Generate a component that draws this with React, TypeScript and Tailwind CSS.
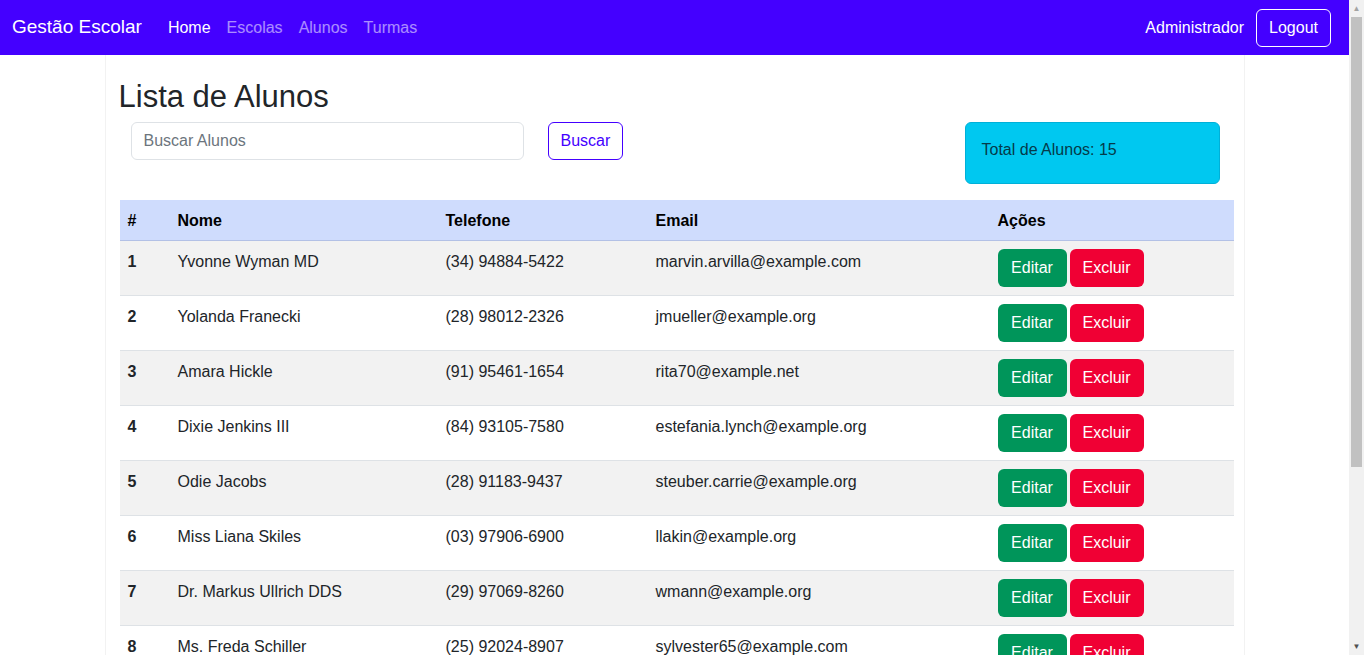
import React from "react";

const alunos = [
  { id: 1, nome: "Yvonne Wyman MD", tel: "(34) 94884-5422", email: "marvin.arvilla@example.com" },
  { id: 2, nome: "Yolanda Franecki", tel: "(28) 98012-2326", email: "jmueller@example.org" },
  { id: 3, nome: "Amara Hickle", tel: "(91) 95461-1654", email: "rita70@example.net" },
  { id: 4, nome: "Dixie Jenkins III", tel: "(84) 93105-7580", email: "estefania.lynch@example.org" },
  { id: 5, nome: "Odie Jacobs", tel: "(28) 91183-9437", email: "steuber.carrie@example.org" },
  { id: 6, nome: "Miss Liana Skiles", tel: "(03) 97906-6900", email: "llakin@example.org" },
  { id: 7, nome: "Dr. Markus Ullrich DDS", tel: "(29) 97069-8260", email: "wmann@example.org" },
  { id: 8, nome: "Ms. Freda Schiller", tel: "(25) 92024-8907", email: "sylvester65@example.com" },
  { id: 9, nome: "Prof. Ken Bauch", tel: "(41) 93310-1182", email: "kbauch@example.net" },
];

export default function App() {
  return (
    <div className="h-[655px] overflow-hidden flex bg-white text-[#212529] font-['Liberation_Sans',Arial,sans-serif] text-[16px]">
      <div className="w-[1349px] h-full overflow-hidden shrink-0">
        {/* navbar */}
        <nav className="h-[55px] bg-[#4400ff] flex items-center justify-between pl-3 pr-[18px]">
          <div className="flex items-center">
            <span className="text-white text-[19px] mr-[26px]">Gestão Escolar</span>
            <div className="flex items-center gap-4 text-[16px]">
              <a className="text-white">Home</a>
              <a className="text-white/55">Escolas</a>
              <a className="text-white/55">Alunos</a>
              <a className="text-white/55">Turmas</a>
            </div>
          </div>
          <div className="flex items-center gap-3">
            <span className="text-white">Administrador</span>
            <button className="h-[38px] px-3 rounded-md border border-white text-white">Logout</button>
          </div>
        </nav>

        {/* container */}
        <div className="w-[1140px] mx-auto border-x border-[#f2f2f2] px-3 pb-8">
          <h1 className="text-[31px] leading-[38px] pt-[23px] mb-[6px] pl-[1px]">Lista de Alunos</h1>

          <div className="flex items-start mb-4">
            <div className="pl-[13px]">
              <input
                className="w-[393px] h-[38px] border border-[#dee2e6] rounded-md px-3 placeholder:text-[#6c757d] outline-none"
                placeholder="Buscar Alunos"
              />
            </div>
            <button className="ml-[24px] h-[38px] px-3 rounded-md border border-[#4400ff] text-[#4400ff]">Buscar</button>
            <div className="ml-auto mr-3 w-[255px] h-[62px] rounded-md bg-[#00c8f0] border border-[#00b0d8] px-4 pt-[15px] text-[#053b4a]">
              Total de Alunos: 15
            </div>
          </div>

          <table className="w-[1114px] ml-[2px] border-collapse table-fixed">
            <colgroup>
              <col className="w-[50px]" />
              <col className="w-[268px]" />
              <col className="w-[210px]" />
              <col className="w-[342px]" />
              <col className="w-[244px]" />
            </colgroup>
            <thead>
              <tr className="bg-[#cfdcfd] border-b border-[#b3c1e6] text-black font-bold text-left">
                <th className="px-2 pt-[9px] pb-[7px] leading-6">#</th>
                <th className="px-2 pt-[9px] pb-[7px] leading-6">Nome</th>
                <th className="px-2 pt-[9px] pb-[7px] leading-6">Telefone</th>
                <th className="px-2 pt-[9px] pb-[7px] leading-6">Email</th>
                <th className="px-2 pt-[9px] pb-[7px] leading-6">Ações</th>
              </tr>
            </thead>
            <tbody>
              {alunos.map((a, i) => (
                <tr key={a.id} className={`border-b border-[#dee2e6] ${i % 2 === 0 ? "bg-[#f2f2f2]" : "bg-white"}`}>
                  <td className="px-2 pt-[9px] align-top leading-6 font-bold">{a.id}</td>
                  <td className="px-2 pt-[9px] align-top leading-6">{a.nome}</td>
                  <td className="px-2 pt-[9px] align-top leading-6">{a.tel}</td>
                  <td className="px-2 pt-[9px] align-top leading-6">{a.email}</td>
                  <td className="px-2 py-2 align-top">
                    <div className="flex gap-[3px]">
                      <button className="h-[38px] w-[69px] rounded-md bg-[#00955a] text-white">Editar</button>
                      <button className="h-[38px] w-[74px] rounded-md bg-[#f00034] text-white">Excluir</button>
                    </div>
                  </td>
                </tr>
              ))}
            </tbody>
          </table>
        </div>
      </div>

      {/* scrollbar */}
      <div className="w-[15px] h-full bg-[#f1f1f1] flex flex-col items-center shrink-0">
        <div className="h-[17px] flex items-center justify-center text-[8px] text-[#a3a3a3]">▲</div>
        <div className="w-[11px] h-[450px] bg-[#c1c1c1]" />
        <div className="flex-1" />
        <div className="h-[17px] flex items-center justify-center text-[8px] text-[#505050]">▼</div>
      </div>
    </div>
  );
}
